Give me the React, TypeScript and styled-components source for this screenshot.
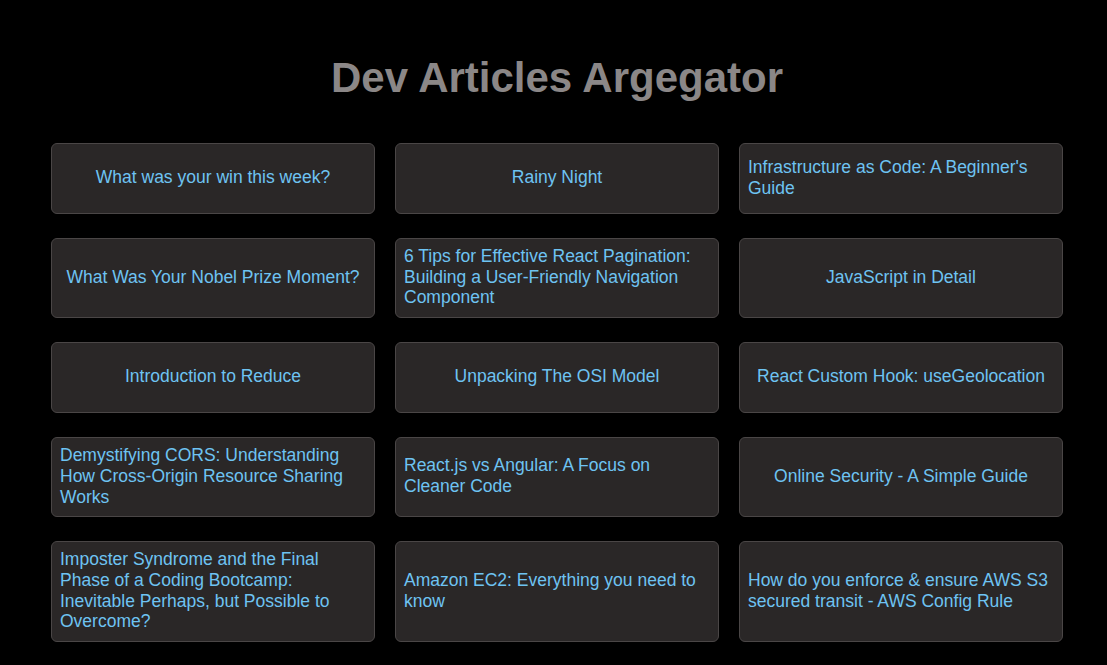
import React from "react";
import styled, { createGlobalStyle } from "styled-components";

const Global = createGlobalStyle`
  html, body { margin: 0; padding: 0; background: #000000; }
  body { font-family: "Liberation Sans", Arial, sans-serif; }
`;

const Page = styled.main`
  min-height: 665px;
  background: #000;
  padding: 53px 44px 20px 51px;
  box-sizing: border-box;
`;

const Title = styled.h1`
  margin: 0 0 40px;
  text-align: center;
  font-size: 42px;
  line-height: 50px;
  font-weight: 700;
  color: #8b8787;
`;

const Grid = styled.div`
  display: grid;
  grid-template-columns: repeat(3, 324px);
  column-gap: 20px;
  row-gap: 24px;
`;

const Card = styled.a`
  display: flex;
  align-items: center;
  justify-content: center;
  min-height: 71px;
  box-sizing: border-box;
  padding: 7px 8px 9px;
  background: #2a2727;
  border: 1px solid #4a4646;
  border-radius: 6px;
  color: #6ec3f2;
  font-size: 17.5px;
  line-height: 20.7px;
  text-decoration: none;
`;

const titles = [
  "What was your win this week?",
  "Rainy Night",
  "Infrastructure as Code: A Beginner's Guide",
  "What Was Your Nobel Prize Moment?",
  "6 Tips for Effective React Pagination: Building a User-Friendly Navigation Component",
  "JavaScript in Detail",
  "Introduction to Reduce",
  "Unpacking The OSI Model",
  "React Custom Hook: useGeolocation",
  "Demystifying CORS: Understanding How Cross-Origin Resource Sharing Works",
  "React.js vs Angular: A Focus on Cleaner Code",
  "Online Security - A Simple Guide",
  "Imposter Syndrome and the Final Phase of a Coding Bootcamp: Inevitable Perhaps, but Possible to Overcome?",
  "Amazon EC2: Everything you need to know",
  "How do you enforce & ensure AWS S3 secured transit - AWS Config Rule",
];

export default function App() {
  return (
    <>
      <Global />
      <Page>
        <Title>Dev Articles Argegator</Title>
        <Grid>
          {titles.map((t) => (
            <Card key={t} href="#">
              {t}
            </Card>
          ))}
        </Grid>
      </Page>
    </>
  );
}
